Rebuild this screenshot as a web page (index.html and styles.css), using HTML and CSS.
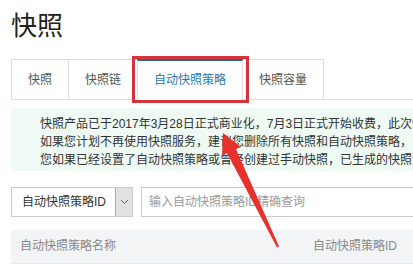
FILE: index.html
```html
<!DOCTYPE html>
<html lang="zh-CN">

<head>
    <meta charset="UTF-8">
    <meta name="viewport" content="width=device-width, initial-scale=1.0">
    <title>快照</title>
    <link rel="stylesheet" href="styles.css">
</head>

<body>
    <div class="page">
        <h1 class="title">快照</h1>

        <ul class="tabs">
            <li class="tab">快照</li>
            <li class="tab">快照链</li>
            <li class="tab active">自动快照策略</li>
            <li class="tab">快照容量</li>
        </ul>

        <div class="notice">
            <p>快照产品已于2017年3月28日正式商业化，7月3日正式开始收费，此次快照商业化将以快照容量计费。</p>
            <p>如果您计划不再使用快照服务，建议您删除所有快照和自动快照策略，以免产生费用。</p>
            <p>您如果已经设置了自动快照策略或曾经创建过手动快照，已生成的快照会在收费后开始计费。</p>
        </div>

        <div class="filter">
            <div class="select">
                <span class="select-text">自动快照策略ID</span>
                <span class="select-btn">
                    <svg width="9" height="6" viewBox="0 0 9 6"><path d="M1 1l3.5 3.5L8 1" fill="none" stroke="#666" stroke-width="1"/></svg>
                </span>
            </div>
            <input class="search" type="text" placeholder="输入自动快照策略ID精确查询">
        </div>

        <div class="table-head">
            <span class="col-name">自动快照策略名称</span>
            <span class="col-id">自动快照策略ID</span>
        </div>
    </div>

    <!-- 标注 -->
    <div class="mark-box"></div>
    <svg class="mark-arrow" width="413" height="272" viewBox="0 0 413 272">
        <polygon points="223,133 241,147 236,149 279,246.5 277,247.5 227,153 222,155.5" fill="#e8302c"/>
    </svg>
</body>

</html>
```

FILE: styles.css
```css
body {
    margin: 0;
    padding: 0;
    width: 413px;
    height: 272px;
    overflow: hidden;
    position: relative;
    background: #fff;
    font-family: "Liberation Sans", "Noto Sans CJK SC", sans-serif;
    color: #333;
}

.page {
    width: 640px;
    padding-left: 11px;
}

.title {
    margin: 0;
    padding-top: 10px;
    font-size: 26px;
    line-height: 32px;
    font-weight: normal;
    color: #222;
}

.tabs {
    display: flex;
    margin: 17px 0 0;
    padding: 0;
    list-style: none;
    border-bottom: 1px solid #ddd;
    height: 40px;
}

.tab {
    height: 40px;
    padding: 0 16px;
    border: 1px solid #ddd;
    border-bottom: none;
    margin-right: -1px;
    font-size: 12px;
    line-height: 40px;
    color: #555;
    box-sizing: border-box;
}

.tab.active {
    height: 41px;
    border-top: 2px solid #2f5f8f;
    line-height: 38px;
    background: #fff;
    color: #2a78b4;
    position: relative;
    z-index: 1;
}

.notice {
    margin-top: 8px;
    height: 63px;
    box-sizing: border-box;
    padding: 7px 0 0 29px;
    background: #eefaf3;
    font-size: 12px;
    line-height: 18px;
    color: #333;
    white-space: nowrap;
}

.notice p {
    margin: 0;
}

.filter {
    display: flex;
    gap: 8px;
    margin-top: 16px;
    height: 30px;
}

.select {
    display: flex;
    width: 122px;
    box-sizing: border-box;
    border: 1px solid #ccc;
}

.select-text {
    flex: 1;
    padding-left: 10px;
    font-size: 12px;
    line-height: 28px;
    color: #333;
}

.select-btn {
    width: 16px;
    display: flex;
    align-items: center;
    justify-content: center;
    background: #e1e1e1;
    border-left: 1px solid #aaa;
}

.search {
    flex: 1;
    height: 30px;
    box-sizing: border-box;
    border: 1px solid #ccc;
    padding: 0 7px;
    font-family: inherit;
    font-size: 12px;
    outline: none;
}

.search::placeholder {
    color: #999;
}

.table-head {
    display: flex;
    margin-top: 13px;
    height: 34px;
    background: #f2f4f6;
    border-bottom: 1px solid #e6e8ea;
    box-sizing: border-box;
    font-size: 12px;
    line-height: 33px;
    color: #888;
}

.col-name {
    width: 302px;
    padding-left: 9px;
    box-sizing: border-box;
}

.mark-box {
    position: absolute;
    left: 132px;
    top: 56px;
    width: 117px;
    height: 47px;
    box-sizing: border-box;
    border: 3px solid #d5343b;
    z-index: 2;
}

.mark-arrow {
    position: absolute;
    left: 0;
    top: 0;
    z-index: 3;
}
```
